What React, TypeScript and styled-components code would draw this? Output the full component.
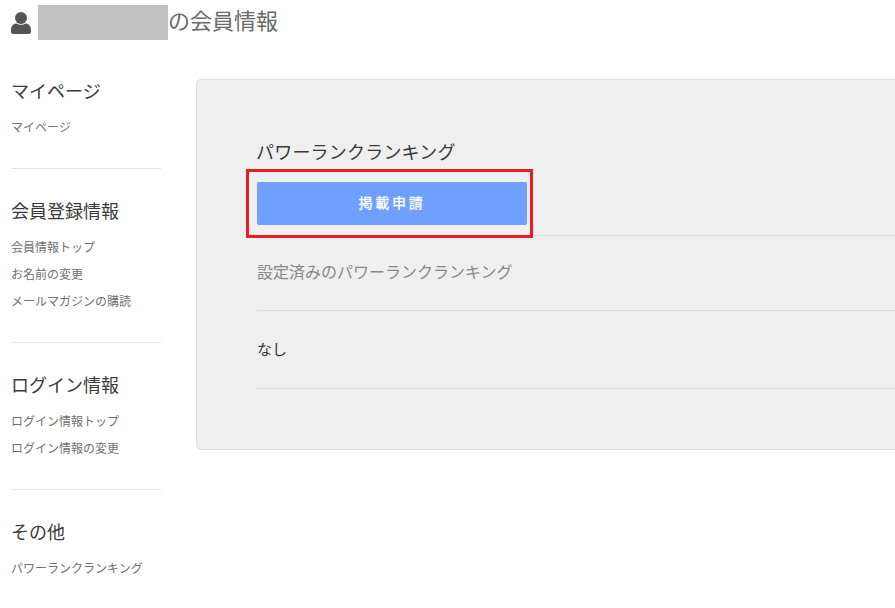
import React from "react";
import styled, { createGlobalStyle } from "styled-components";

const GlobalStyle = createGlobalStyle`
  html, body {
    margin: 0;
    padding: 0;
    height: 608px;
    overflow: hidden;
    background: #ffffff;
    font-family: "Liberation Sans", "Noto Sans CJK JP", sans-serif;
  }
`;

const Page = styled.div`
  width: 895px;
  height: 608px;
  overflow: hidden;
`;

const Header = styled.header`
  display: flex;
  align-items: center;
  height: 35px;
  margin-top: 5px;
  padding-left: 11px;
`;

const UserIcon = styled.svg`
  width: 20px;
  height: 22px;
  fill: #555555;
  margin-right: 7px;
`;

const Redacted = styled.div`
  width: 130px;
  height: 35px;
  background: #c1c1c1;
`;

const Title = styled.h1`
  margin: 0 0 7px;
  font-size: 22px;
  font-weight: 400;
  color: #6a6a6a;
`;

const Body = styled.div`
  display: flex;
  align-items: flex-start;
  margin-top: 39px;
`;

const Sidebar = styled.nav`
  flex: none;
  width: 150px;
  margin-left: 11px;
  padding-top: 1px;
`;

const Section = styled.section`
  padding-bottom: 31px;
  margin-bottom: 31px;
  border-bottom: 1px solid #e4e4e4;

  &:last-child {
    border-bottom: none;
    margin-bottom: 0;
  }
`;

const SectionTitle = styled.h2`
  margin: 0 0 15px;
  font-size: 18px;
  line-height: 24px;
  font-weight: 400;
  color: #3a3a3a;
`;

const LinkList = styled.ul`
  list-style: none;
  margin: 0;
  padding: 0;
  display: flex;
  flex-direction: column;
  gap: 9px;
`;

const SideLink = styled.a`
  display: block;
  font-size: 12px;
  line-height: 18px;
  color: #707070;
  text-decoration: none;
`;

const Panel = styled.main`
  position: relative;
  flex: none;
  box-sizing: border-box;
  width: 800px;
  height: 371px;
  margin-left: 35px;
  padding: 60px 0 0 60px;
  background: #efefef;
  border: 1px solid #dddddd;
  border-radius: 5px;
`;

const PanelTitle = styled.h2`
  margin: 0 0 15px -1px;
  font-size: 18px;
  line-height: 27px;
  font-weight: 400;
  letter-spacing: 0.2px;
  color: #3a3a3a;
`;

const ApplyButton = styled.button`
  display: block;
  box-sizing: border-box;
  width: 270px;
  height: 43px;
  padding: 0 0 3px;
  border: none;
  border-radius: 2px;
  background: #6f9fff;
  color: #ffffff;
  font-family: inherit;
  font-size: 14px;
  font-weight: 400;
  letter-spacing: 2.8px;
  -webkit-text-stroke: 0.3px #ffffff;
`;

const Row = styled.div<{ $muted?: boolean }>`
  display: flex;
  align-items: center;
  height: ${(p) => (p.$muted ? 70 : 75)}px;
  padding-bottom: ${(p) => (p.$muted ? 4 : 2)}px;
  border-top: 1px solid #dcdcdc;
  font-size: ${(p) => (p.$muted ? 16 : 15)}px;
  color: ${(p) => (p.$muted ? "#888888" : "#333333")};
`;

const LastRow = styled(Row)`
  border-bottom: 1px solid #dcdcdc;
`;

const RowGroup = styled.div`
  margin-top: 10px;
`;

const Highlight = styled.div`
  position: absolute;
  left: 49px;
  top: 89px;
  width: 281px;
  height: 63px;
  border: 3px solid #ed1c24;
`;

const sections = [
  { title: "マイページ", links: ["マイページ"] },
  { title: "会員登録情報", links: ["会員情報トップ", "お名前の変更", "メールマガジンの購読"] },
  { title: "ログイン情報", links: ["ログイン情報トップ", "ログイン情報の変更"] },
  { title: "その他", links: ["パワーランクランキング"] },
];

export default function App() {
  return (
    <Page>
      <GlobalStyle />
      <Header>
        <UserIcon viewBox="0 0 20 22">
          <circle cx="10" cy="6" r="6" />
          <path d="M0 18c0-4 2.500-6.500 5.500-6.500 1.200.8 2.800 1.300 4.500 1.300s3.300-.5 4.500-1.300c3 0 5.500 2.500 5.500 6.500v2c0 1.200-.8 2-2 2H2c-1.200 0-2-.8-2-2z" />
        </UserIcon>
        <Redacted />
        <Title>の会員情報</Title>
      </Header>
      <Body>
        <Sidebar>
          {sections.map((section) => (
            <Section key={section.title}>
              <SectionTitle>{section.title}</SectionTitle>
              <LinkList>
                {section.links.map((link) => (
                  <li key={link}>
                    <SideLink href="#">{link}</SideLink>
                  </li>
                ))}
              </LinkList>
            </Section>
          ))}
        </Sidebar>
        <Panel>
          <PanelTitle>パワーランクランキング</PanelTitle>
          <ApplyButton type="button">掲載申請</ApplyButton>
          <RowGroup>
            <Row $muted>設定済みのパワーランクランキング</Row>
            <LastRow>なし</LastRow>
          </RowGroup>
          <Highlight />
        </Panel>
      </Body>
    </Page>
  );
}
